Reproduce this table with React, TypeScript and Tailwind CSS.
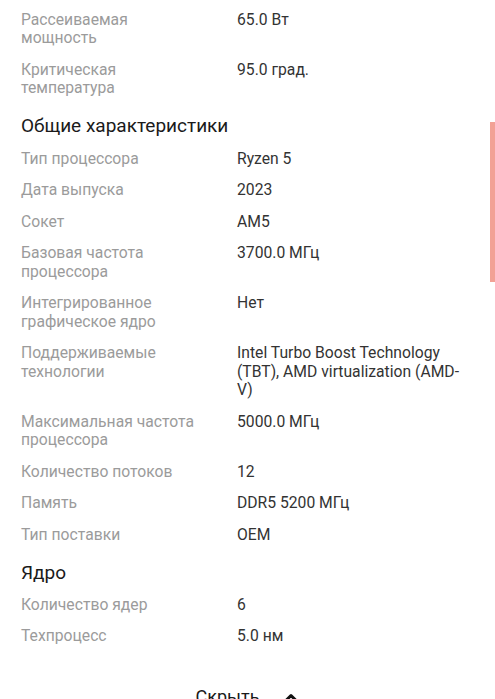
import React from "react";

type Row = { label: string; value: string };

const top: Row[] = [
  { label: "Рассеиваемая мощность", value: "65.0 Вт" },
  { label: "Критическая температура", value: "95.0 град." },
];

const general: Row[] = [
  { label: "Тип процессора", value: "Ryzen 5" },
  { label: "Дата выпуска", value: "2023" },
  { label: "Сокет", value: "AM5" },
  { label: "Базовая частота процессора", value: "3700.0 МГц" },
  { label: "Интегрированное графическое ядро", value: "Нет" },
  {
    label: "Поддерживаемые технологии",
    value: "Intel Turbo Boost Technology (TBT), AMD virtualization (AMD-V)",
  },
  { label: "Максимальная частота процессора", value: "5000.0 МГц" },
  { label: "Количество потоков", value: "12" },
  { label: "Память", value: "DDR5 5200 МГц" },
  { label: "Тип поставки", value: "OEM" },
];

const core: Row[] = [
  { label: "Количество ядер", value: "6" },
  { label: "Техпроцесс", value: "5.0 нм" },
];

function Rows({ rows }: { rows: Row[] }) {
  return (
    <div className="flex flex-col gap-[13px]">
      {rows.map((r) => (
        <div key={r.label} className="flex text-[15.7px] leading-[18.5px]">
          <div className="w-[216px] shrink-0 pr-[38px] text-[#9b9b9b]">{r.label}</div>
          <div className="w-[228px] shrink-0 text-[#333333]">{r.value}</div>
        </div>
      ))}
    </div>
  );
}

function Heading({ children, className }: { children: React.ReactNode; className: string }) {
  return <div className={"text-[19px] leading-[24px] text-[#1a1a1a] " + className}>{children}</div>;
}

export default function App() {
  return (
    <div className="relative w-[495px] h-[699px] overflow-hidden bg-white font-['Roboto',sans-serif]">
      <div className="flex flex-col pl-[21px] pr-[21px] pt-[10.75px]">
        <Rows rows={top} />
        <Heading className="mt-[16.25px] mb-[11.75px]">Общие характеристики</Heading>
        <Rows rows={general} />
        <Heading className="mt-[16.75px] mb-[10.75px]">Ядро</Heading>
        <Rows rows={core} />
        <div className="mt-[39.5px] flex items-center justify-center gap-[24px]">
          <span className="text-[18px] leading-[24px] text-[#1a1a1a]">Скрыть</span>
          <svg width="16" height="10" viewBox="0 0 16 10" className="mt-[2px]">
            <polyline
              points="2,8.5 8,2.5 14,8.5"
              fill="none"
              stroke="#111"
              strokeWidth="3"
              strokeLinecap="round"
              strokeLinejoin="round"
            />
          </svg>
        </div>
      </div>
      <div className="absolute right-0 top-[122px] w-[5px] h-[160px] bg-[#f2a195]" />
    </div>
  );
}
